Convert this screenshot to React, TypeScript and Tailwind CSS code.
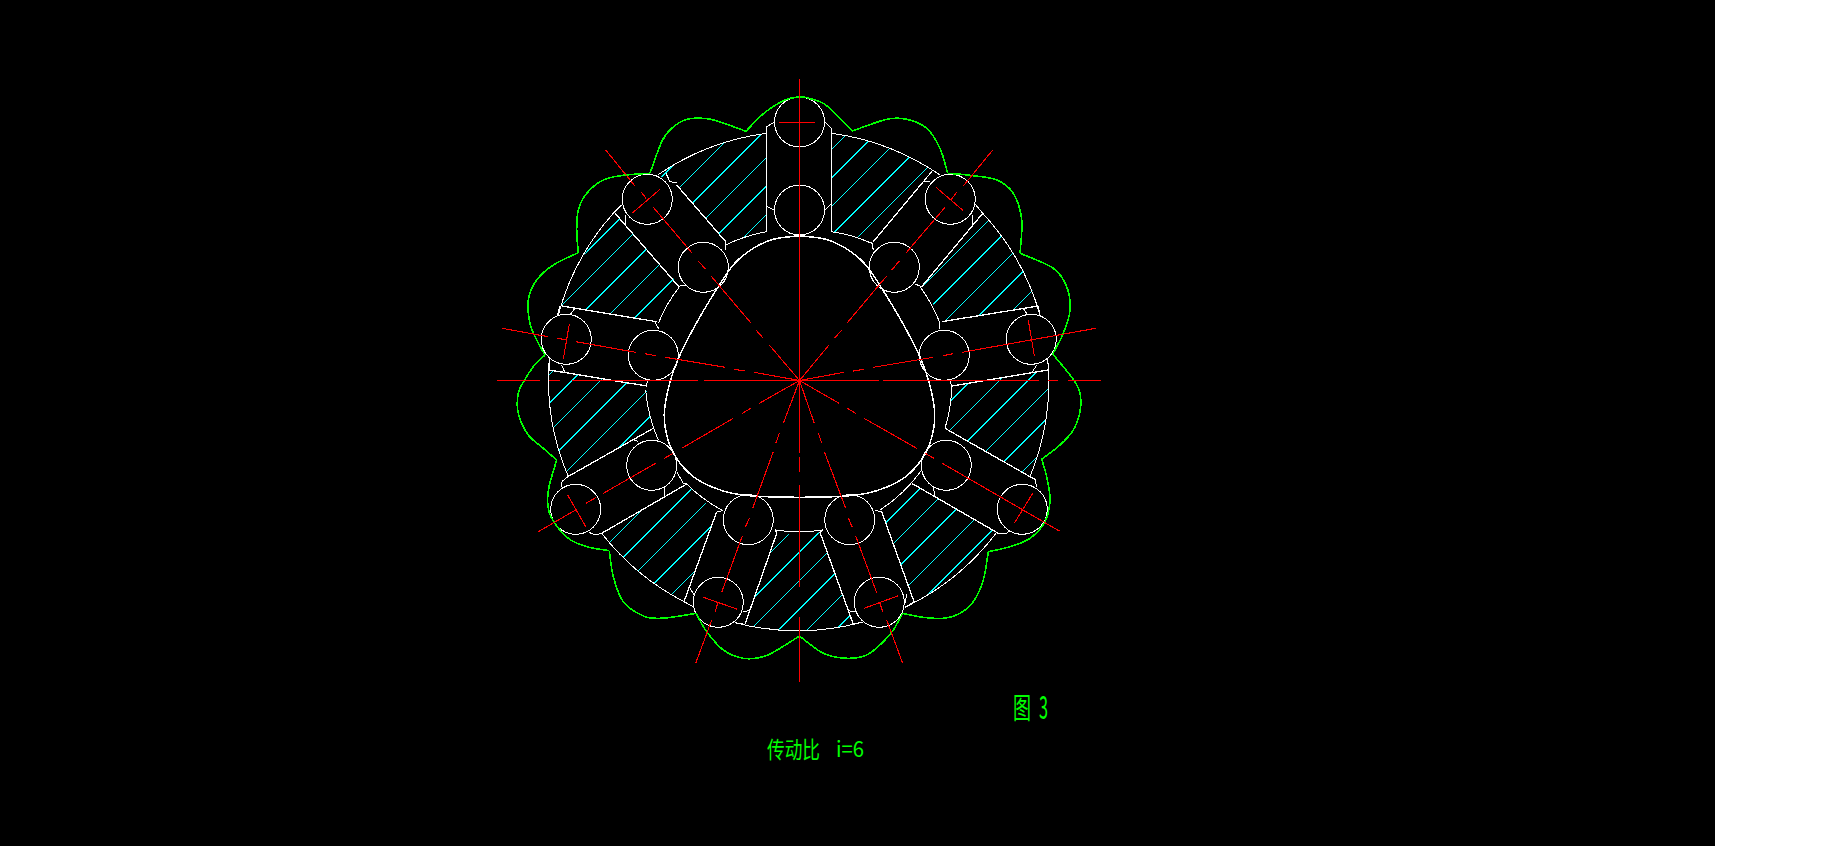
type Pt = [number, number];

// center of the drawing
const CX = 799.5;
const CY = 380.5;

// Catmull-Rom through the points, so the lobes stay round
function smooth(pts: Pt[]) {
  let d = `M${pts[0][0]} ${pts[0][1]}`;
  for (let i = 0; i < pts.length - 1; i++) {
    const p0 = pts[i - 1] || pts[i];
    const p1 = pts[i];
    const p2 = pts[i + 1];
    const p3 = pts[i + 2] || p2;
    const c1x = p1[0] + (p2[0] - p0[0]) / 6;
    const c1y = p1[1] + (p2[1] - p0[1]) / 6;
    const c2x = p2[0] - (p3[0] - p1[0]) / 6;
    const c2y = p2[1] - (p3[1] - p1[1]) / 6;
    d += ` C${c1x.toFixed(1)} ${c1y.toFixed(1)} ${c2x.toFixed(1)} ${c2y.toFixed(1)} ${p2[0]} ${p2[1]}`;
  }
  return d;
}

const segs = (list: number[][]) => list.map((s) => `M${s[0]} ${s[1]}L${s[2]} ${s[3]}`).join("");

const arc = (r: number, a: Pt, b: Pt) => `M${a[0]} ${a[1]}A${r} ${r} 0 0 0 ${b[0]} ${b[1]}`;

const outerPins: Pt[] = [
  [799.5, 122], [647.3, 199.3], [566.3, 339.3], [575.7, 509.3], [718.3, 602.3],
  [879.3, 602.3], [1022.3, 509.3], [1031.3, 339.3], [950.3, 199.3],
];
const innerPins: Pt[] = [
  [799.5, 210], [703.3, 267.3], [653.3, 355.3], [651.7, 465.3], [748.3, 519.7],
  [849.7, 519.7], [946.3, 465.3], [944.3, 355.3], [894.3, 267.3],
];

// green outline, split at the cusps
const greenLobes: Pt[][] = [
  [[746, 131.3], [723, 123], [706.7, 118.7], [686.7, 119.3], [671.7, 128.3], [661.7, 141.7], [650, 173.3]],
  [[650, 173.3], [623.3, 175.3], [603.3, 180], [586.7, 193.3], [578.3, 210], [576.7, 230], [578.3, 252.7]],
  [[578.3, 252.7], [553.3, 265], [536.7, 280], [528.3, 300], [530, 323.3], [536.7, 340], [545, 355]],
  [[545, 355], [533.3, 366.7], [525, 379.3], [518.3, 393.3], [518.3, 413.3], [528.3, 435], [543.3, 448.3], [556.7, 460]],
  [[556.7, 460], [549, 486.7], [547.7, 503.3], [551.7, 518.3], [568.3, 538.3], [586.7, 546.7], [609.3, 550.7]],
  [[609.3, 550.7], [613.3, 576.7], [623.3, 601.7], [643.3, 616], [660, 618.3], [680, 616], [696, 613.3]],
  [[696, 613.3], [706.7, 631.7], [723.3, 650], [743.3, 658.3], [763.3, 656.7], [780, 648.3], [799.5, 636]],
  [[799.5, 636], [823.3, 653.3], [846.7, 658.3], [866.7, 655], [883.3, 641.7], [893.3, 630], [902.7, 613.3]],
  [[902.7, 613.3], [923.3, 617.3], [943.3, 618.3], [960, 613.3], [973.3, 601.7], [983.3, 580], [988.3, 551.7]],
  [[988.3, 551.7], [1010, 546.7], [1030, 538.3], [1045, 521.7], [1050, 500], [1046.7, 476.7], [1041.7, 459.3]],
  [[1041.7, 459.3], [1060, 445], [1073.3, 430], [1080, 411.7], [1080, 393.3], [1073.3, 379.3], [1052.7, 354]],
  [[1052.7, 354], [1063.3, 333.3], [1070, 310], [1066.7, 286.7], [1053.3, 268.3], [1020, 253.3]],
  [[1020, 253.3], [1021.7, 220], [1013.3, 193.3], [996.7, 180], [970, 175.3], [947.7, 173.3]],
  [[947.7, 173.3], [940, 148.3], [926.7, 128.3], [906.7, 119.3], [886.7, 119.3], [852.3, 131]],
  [[852.3, 131], [836.7, 115], [823.3, 103.3], [806.7, 97.7], [799.5, 97], [786.7, 99.3], [773, 106.7], [760, 116.7], [746, 131.3]],
];

// cam, left half, mirrored for the right
const camLeft: Pt[] = [
  [799.5, 235.7], [773.3, 239.3], [753.3, 248.3], [735, 263], [720, 284], [697, 322], [679, 357],
  [670, 382], [664.3, 413.3], [667.5, 438], [677, 459], [693.3, 476.7], [713.3, 487.5], [733.3, 493.5],
  [756.7, 496.3], [780, 497], [799.5, 497.3],
];
const camRight: Pt[] = camLeft.map(([x, y]) => [1599 - x, y] as Pt).reverse();
const camPath = smooth([...camLeft, ...camRight.slice(1)]);

const outerArcs: [Pt, Pt][] = [
  [[766.7, 133.3], [657.7, 175]],
  [[613.3, 213.3], [558.3, 315]],
  [[549.3, 358], [568.3, 476.7]],
  [[601.7, 533.3], [684, 601.7]],
  [[735, 622.7], [864, 621.7]],
  [[905, 607.3], [996, 533.3]],
  [[1030, 476.7], [1047.7, 358]],
  [[1040, 315], [982.7, 213.3]],
  [[940, 175], [831.7, 133.3]],
];
const innerArcs: [Pt, Pt][] = [
  [[766.7, 231.7], [725.7, 245]],
  [[680, 286], [658.3, 323.3]],
  [[645.7, 390], [658.3, 440]],
  [[686.7, 484], [721.7, 510]],
  [[775, 530], [823, 530]],
  [[880, 510], [921.7, 470]],
  [[945, 428.3], [951.7, 386]],
  [[940, 323.3], [920, 286.7]],
  [[871.7, 243.3], [831.7, 231.7]],
];

// slot walls
const walls = segs([
  [766.5, 133, 766.5, 231.5], [831.5, 128, 831.5, 231.5],
  [615, 213.3, 678.3, 286], [676.7, 185, 725.7, 241.7],
  [561.7, 306, 656.7, 321.7], [549.3, 370, 646.7, 386],
  [567.7, 476.7, 653.3, 428.3], [601.7, 533.3, 686.7, 484],
  [716.7, 511.7, 684, 601.7], [776.7, 533.3, 745, 624.3],
  [881.7, 511.7, 914, 601.7], [820, 532.3, 853.3, 624.3],
  [911.7, 483.3, 998.3, 533.3], [945, 428.3, 1030, 476.7],
  [951.7, 386, 1048.3, 370], [941.7, 321.7, 1038.3, 306],
  [921.7, 286.7, 982.7, 213.3], [873.3, 241.7, 923.3, 181.7],
]);

// little fillets where walls meet the pins
const stubs = segs([
  [766.5, 126.7, 775, 121.7], [766.5, 126.7, 766.5, 133], [766.5, 206, 775, 210.7],
  [825, 122.3, 831.5, 128.3], [831.5, 203.3, 824.3, 210.7],
  [666, 173.3, 670, 181.7], [670, 181.7, 676.7, 182.7], [613.3, 213.3, 621.7, 205], [625.7, 215, 625.7, 225],
  [725.7, 241.7, 725.7, 250], [678.3, 286, 680, 286], [680, 286, 685, 285],
  [560, 306, 557.3, 315], [575, 308.3, 570, 315], [655, 322.3, 659, 329.3],
  [550, 358, 549.3, 370], [561.7, 365, 565, 372.7], [645.7, 386, 648.3, 380],
  [567.7, 476.7, 561.7, 481.7], [561.7, 481.7, 561, 486.7], [632, 439, 638.3, 441.7],
  [589, 532.3, 595, 535], [595, 535, 601.7, 533.3], [664, 486.7, 664, 496], [676.7, 471.7, 683.3, 483.3], [683.3, 483.3, 686.7, 484],
  [716.7, 511.7, 723.3, 510.7], [689.3, 586.7, 694, 595], [684, 601.7, 693.3, 606.7],
  [775, 529.5, 777, 533.3], [745, 624.3, 735, 622.7], [742.7, 611.7, 749.3, 610.7],
  [853.3, 624.3, 864, 621.7], [848.3, 610.7, 855, 611.7], [905, 607.3, 914, 601.7], [906.7, 594, 905, 603],
  [823.3, 529.3, 820, 532.3], [875, 510.5, 881.7, 511.7],
  [933.3, 486.7, 935, 496], [998.3, 533.3, 1006.7, 533.3], [1006.7, 533.3, 1010, 530.7],
  [1030, 476.7, 1035, 479.3], [1035, 479.3, 1036.7, 486.7],
  [951.7, 386, 950, 380], [1047.7, 358, 1048.3, 370], [1036.7, 365, 1031.7, 373],
  [940, 323.3, 939.3, 329.3], [1023.3, 308.3, 1027.7, 315], [1038.3, 306, 1040, 315],
  [871.7, 241.7, 873.3, 250], [915, 284, 921.7, 286.7], [972.7, 215, 972.7, 225],
  [975, 204, 982.7, 213.3], [933, 170, 923.3, 181.7], [923.3, 181.7, 930, 182],
]);

// hatched body, one closed piece between each pair of slots
const bodyPieces = [
  `M766.5 133.3A250 250 0 0 0 657.7 175L676.7 185L725.7 241.7L725.7 245A152 152 0 0 1 766.5 231.7Z`,
  `M615 213.3A250 250 0 0 0 561.7 306L656.7 321.7A152 152 0 0 1 680 286Z`,
  `M549.3 370A250 250 0 0 0 567.7 476.7L653.3 428.3A152 152 0 0 1 646.7 386Z`,
  `M601.7 533.3A250 250 0 0 0 684 601.7L716.7 511.7A152 152 0 0 1 686.7 484Z`,
  `M745 624.3A250 250 0 0 0 853.3 624.3L820 532.3A152 152 0 0 1 776.7 533.3Z`,
  `M914 601.7A250 250 0 0 0 998.3 533.3L911.7 483.3A152 152 0 0 1 881.7 511.7Z`,
  `M1030 476.7A250 250 0 0 0 1048.3 370L951.7 386A152 152 0 0 1 945 428.3Z`,
  `M1038.3 306A250 250 0 0 0 982.7 213.3L921.7 286.7A152 152 0 0 1 941.7 321.7Z`,
  `M923.3 181.7L940 175A250 250 0 0 0 831.5 133.3L831.5 231.7A152 152 0 0 1 873.3 241.7Z`,
];

const hatch = Array.from({ length: 25 }, (_, k) => {
  const c = 838.5 + 28.5 * k;
  return `M${c - 100} 100L${c - 680} 680`;
}).join("");

// center lines, dashes as they fall in the drawing
const redThin = segs([
  [799.5, 79, 799.5, 381], [799.5, 381, 799.5, 453], [799.5, 457, 799.5, 472], [799.5, 485, 799.5, 587], [799.5, 617, 799.5, 682],
  [497, 380.5, 540, 380.5], [549, 380.5, 560, 380.5], [572, 380.5, 698, 380.5], [704, 380.5, 879, 380.5],
  [883, 380.5, 1039, 380.5], [1048, 380.5, 1058, 380.5], [1068, 380.5, 1101, 380.5],
  [779, 122.5, 815, 122.5],
]);
const redLines = segs([
  // upper left
  [CX, CY, 769.3, 345], [763.3, 338.3, 756, 330], [750.7, 322.7, 711, 276], [705.7, 269.3, 698.3, 261],
  [692.3, 253.3, 653.3, 207.3], [641.3, 192, 646, 198.3], [635, 186, 605.7, 150], [632.3, 213, 660, 189.3],
  // upper right
  [CX, CY, 829, 345], [834.3, 338.3, 841.7, 330], [847.3, 322.7, 886.7, 276], [891.7, 270, 899.3, 261],
  [905.7, 253.3, 945, 207.3], [951, 200, 956.7, 192], [963.3, 186, 992.7, 150], [936, 187.3, 963.3, 210.7],
  // left
  [CX, CY, 754, 372.3], [745, 371, 734, 369.3], [725, 367.3, 665, 357.3], [656, 355.7, 645, 353.7],
  [635.7, 352.3, 576, 341.7], [566.7, 340, 557.3, 338.3], [548, 336.7, 502.3, 328.3], [569.3, 324.3, 563.3, 359],
  // right
  [CX, CY, 844, 372.3], [853.3, 371, 864, 369.3], [873.3, 367.3, 933.3, 357.3], [942.7, 355.7, 953.3, 353.7],
  [962.3, 352.3, 1095.7, 328.3], [1028.3, 320, 1034.3, 355.7],
  // lower left
  [CX, CY, 759.3, 403.3], [750.7, 408.3, 742.3, 413.3], [733.3, 418.3, 681.7, 448.3], [673.3, 453.3, 664.3, 458.3],
  [655.7, 463.3, 603.3, 493.3], [595.7, 497.7, 586, 503.3], [576.7, 509.3, 538.3, 531.7], [567.7, 495, 585.7, 526.7],
  // lower right
  [CX, CY, 839, 403.3], [847.3, 408.3, 855.7, 413.3], [864, 418.3, 916.7, 448.3], [925, 453.3, 934, 458.3],
  [942.3, 463.3, 1059.3, 531], [1032.7, 493.3, 1014.3, 523.3],
  // bottom left
  [CX, CY, 783.3, 423.3], [779.3, 433.3, 776, 442.7], [773.3, 451.7, 752.7, 508.3], [749.3, 518.3, 745.3, 527.3],
  [742.3, 536, 721.7, 592.3], [717.7, 603.3, 715.3, 611.7], [711.7, 620, 695.7, 663.3], [703.3, 597.3, 736.7, 609],
  // bottom right
  [CX, CY, 814.3, 423.3], [818.3, 433.3, 821.7, 442.7], [824.3, 451.7, 845.7, 508.3], [848.3, 518, 852.3, 527.3],
  [855.7, 536, 876.7, 592.7], [880, 603.3, 882.7, 611.7], [886.7, 620, 902.7, 663.3], [864, 608.3, 897.7, 596],
]);

const cadFont = "'Noto Sans CJK SC', 'Liberation Sans', sans-serif";

function Drawing() {
  return (
    <svg viewBox="0 0 1715 846" shapeRendering="crispEdges" className="block h-full w-full" fill="none">
      <defs>
        <clipPath id="body">
          {bodyPieces.map((d, i) => (
            <path key={i} d={d} />
          ))}
        </clipPath>
      </defs>

      <path d={hatch} stroke="#00ffff" strokeWidth={1} clipPath="url(#body)" />

      {/* pins */}
      {[...outerPins, ...innerPins].map(([x, y], i) => (
        <circle key={i} cx={x} cy={y} r={25} stroke="#fff" strokeWidth={1} />
      ))}

      {/* body */}
      {outerArcs.map(([a, b], i) => (
        <path key={i} d={arc(250, a, b)} stroke="#fff" strokeWidth={1} />
      ))}
      {innerArcs.map(([a, b], i) => (
        <path key={i} d={arc(153, a, b)} stroke="#fff" strokeWidth={1} />
      ))}
      <path d={walls} stroke="#fff" strokeWidth={1.3} />
      <path d={stubs} stroke="#fff" strokeWidth={1} />
      <path d={camPath} stroke="#fff" strokeWidth={1.5} />

      {/* outline */}
      {greenLobes.map((l, i) => (
        <path key={i} d={smooth(l)} stroke="#00ff00" strokeWidth={1.6} />
      ))}

      {/* center lines */}
      <path d={redThin} stroke="#ff0000" strokeWidth={1} />
      <path d={redLines} stroke="#ff0000" strokeWidth={1.1} />

      {/* labels */}
      <g fill="#00ff00" fontFamily={cadFont} shapeRendering="auto">
        <text x={1013} y={719} fontSize={29} textLength={18} lengthAdjust="spacingAndGlyphs">
          图
        </text>
        <text x={1039} y={719} fontSize={32} textLength={9} lengthAdjust="spacingAndGlyphs">
          3
        </text>
        <text x={767} y={758} fontSize={23} textLength={53} lengthAdjust="spacingAndGlyphs">
          传动比
        </text>
        <text x={836} y={757} fontSize={22} textLength={28} lengthAdjust="spacingAndGlyphs">
          i=6
        </text>
      </g>
    </svg>
  );
}

export default function App() {
  return (
    <div className="h-screen w-screen overflow-hidden bg-white">
      <div className="h-[846px] w-[1715px] bg-black">
        <Drawing />
      </div>
    </div>
  );
}
